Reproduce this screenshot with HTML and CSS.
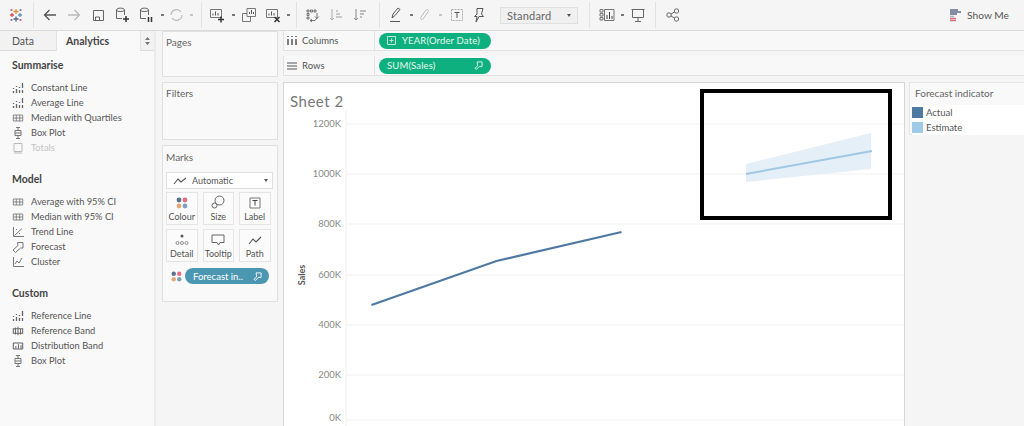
FILE: index.html
```html
<!DOCTYPE html>
<html lang="en">
<head>
<meta charset="utf-8">
<title>Sheet 2</title>
<link rel="stylesheet" href="styles.css">
</head>
<body>
<svg class="defs" aria-hidden="true">
  <symbol id="i-const" viewBox="0 0 12 12"><path d="M1.500 6v1M1.500 9v2M4.500 4v1M4.500 7v4M7.500 5v1M7.500 8v3M10.500 1v5M10.500 8v3" fill="none" stroke="#666" stroke-width="1.300"/></symbol>
  <symbol id="i-band" viewBox="0 0 14 12"><path d="M1.500 2.500h11v7h-11zM1.500 6h11M5 2.500v7M9 2.500v7" fill="none" stroke="#777" stroke-width="1"/></symbol>
  <symbol id="i-box" viewBox="0 0 12 12"><path d="M3 3.500h6v5H3zM3 6h6M6 .5v3M6 8.500v3M4 .5h4M4 11.500h4" fill="none" stroke="#777" stroke-width="1"/></symbol>
  <symbol id="i-totals" viewBox="0 0 12 12"><path d="M2 1.500h8v8H2zM2 11h8" fill="none" stroke="#bbb" stroke-width="1"/></symbol>
  <symbol id="i-trend" viewBox="0 0 12 12"><path d="M1.500 1v9.500H12M2.500 9.500 10 2.500M4 3l1 1M7 7l1 1" fill="none" stroke="#777" stroke-width="1"/></symbol>
  <symbol id="i-fore" viewBox="0 0 12 12"><path d="M5.500 1.500h5.500v5.500H8.500L3.500 11.500 1 9l5-4.500z" fill="none" stroke="#777" stroke-width="1"/></symbol>
  <symbol id="i-clus" viewBox="0 0 12 12"><path d="M1.500 1v9.500H12M3 8l2-3 2 2 3-5" fill="none" stroke="#777" stroke-width="1"/></symbol>
  <symbol id="i-refb" viewBox="0 0 14 12"><path d="M1.500 3.500h11v5h-11zM4 2v8M7 1v10M10 3v7" fill="none" stroke="#666" stroke-width="1.200"/></symbol>
  <symbol id="i-dist" viewBox="0 0 14 12"><path d="M1.500 2.500h11v7h-11zM4.500 6v3M7.500 4v5M10.500 5v4" fill="none" stroke="#555" stroke-width="1.100"/></symbol>
  <symbol id="i-dots" viewBox="0 0 12 12"><circle cx="3" cy="3" r="2.400" fill="#5b6f8f"/><circle cx="9" cy="3" r="2.400" fill="#e0707f"/><circle cx="3" cy="9" r="2.400" fill="#e5a77a"/><circle cx="9" cy="9" r="2.400" fill="#7aa3b8"/></symbol>
  <symbol id="i-search" viewBox="0 0 10 10"><path d="M3.500 1h5.500v5H6L2.500 9.500 1 8l3-2.500z" fill="none" stroke="currentColor" stroke-width="1"/></symbol>
</svg>

<header class="toolbar">
  <div class="tool-group g1">
    <span class="slot"><svg width="16" height="16" viewBox="0 0 16 16"><g fill="none" stroke-width="1.300"><path d="M8 2v5M5.500 4.500h5" stroke="#e08e3f"/><path d="M8 9.500v5M5.500 12h5" stroke="#4f6390"/><path d="M4 6v4M2 8h4" stroke="#d9525f"/><path d="M12 6v4M10 8h4" stroke="#5f95b0"/><path d="M3.500 2v2M2.500 3h2M12.500 12v2M11.500 13h2" stroke="#c06a8a"/><path d="M12.500 2v2M11.500 3h2M3.500 12v2M2.500 13h2" stroke="#8c7bb0"/></g></svg></span>
  </div>
  <div class="tool-group g2">
    <span class="slot"><svg width="14" height="12" viewBox="0 0 14 12"><path d="M13 6H1.500M6.500 1l-5 5 5 5" fill="none" stroke="#555" stroke-width="1.300"/></svg></span>
    <span class="slot"><svg width="14" height="12" viewBox="0 0 14 12"><path d="M1 6h11.500M7.500 1l5 5-5 5" fill="none" stroke="#bbb" stroke-width="1.300"/></svg></span>
    <span class="slot"><svg width="13" height="13" viewBox="0 0 13 13"><path d="M1.500 1.500h10v10h-10zM3.500 11.500V8h4v3.500" fill="none" stroke="#666"/></svg></span>
    <span class="slot"><svg width="15" height="16" viewBox="0 0 15 16"><path d="M1.500 3c0-2.500 8-2.500 8 0v5M1.500 3v8.500H7M1.500 3c0 2 8 2 8 0" fill="none" stroke="#666"/><path d="M11 9v6M8 12h6" stroke="#333" stroke-width="1.500"/></svg></span>
    <span class="slot"><svg width="15" height="16" viewBox="0 0 15 16"><path d="M1.500 3c0-2.500 8-2.500 8 0v5M1.500 3v8.500H7M1.500 3c0 2 8 2 8 0" fill="none" stroke="#666"/><path d="M9.500 10v5M12.500 10v5" stroke="#333" stroke-width="1.500"/></svg></span>
    <span class="dot w8"></span>
    <span class="slot w20"><svg width="15" height="14" viewBox="0 0 15 14"><path d="M2 7a5.500 5.500 0 0 1 10-3M13 7a5.500 5.500 0 0 1-10 3" fill="none" stroke="#bbb" stroke-width="1.200"/></svg></span>
    <span class="dot w10 pale"></span>
  </div>
  <div class="tool-group g3">
    <span class="slot"><svg width="16" height="16" viewBox="0 0 16 16"><path d="M1.500 2.500h11v8h-11z" fill="none" stroke="#777"/><path d="M4 8.500v-2M6.500 8.500v-4M9 8.500V6" stroke="#555"/><path d="M12 9.500v6M9 12.500h6" stroke="#333" stroke-width="1.500"/></svg></span>
    <span class="dot w8"></span>
    <span class="slot"><svg width="16" height="16" viewBox="0 0 16 16"><path d="M6 1.500h8.500v8H6zM1.500 6.500H6M1.500 6.500v8h8v-5" fill="none" stroke="#777"/><path d="M8.500 7V5M10.500 7V3M12.500 7V5" stroke="#555"/></svg></span>
    <span class="slot"><svg width="16" height="16" viewBox="0 0 16 16"><path d="M1.500 2.500h11v8h-11z" fill="none" stroke="#777"/><path d="M4 8.500v-2M6.500 8.500v-4M9 8.500V6" stroke="#555"/><path d="M9.500 10l5 5M14.500 10l-5 5" stroke="#333" stroke-width="1.500"/></svg></span>
    <span class="dot w6"></span>
  </div>
  <div class="tool-group g4">
    <span class="slot"><svg width="15" height="15" viewBox="0 0 15 15"><path d="M2 2h2v2H2zM5.500 2h2v2h-2zM9 2h2v2H9zM2 5.500h2v2H2zM2 9h2v2H2zM12 5v5l-2 2.500H5" fill="none" stroke="#666" stroke-width=".9"/><path d="M10 8.500l2 2 2-2M7 11l-2 1.500L7 14" fill="none" stroke="#666" stroke-width=".9"/></svg></span>
    <span class="slot"><svg width="14" height="14" viewBox="0 0 14 14"><path d="M3 1v11M1 10l2 2 2-2" fill="none" stroke="#aaa"/><path d="M7 3h2M7 6h4M7 9h6" stroke="#bbb" stroke-width="1.300"/></svg></span>
    <span class="slot"><svg width="14" height="14" viewBox="0 0 14 14"><path d="M3 1v11M1 10l2 2 2-2" fill="none" stroke="#888"/><path d="M7 3h6M7 6h4M7 9h2" stroke="#aaa" stroke-width="1.300"/></svg></span>
  </div>
  <div class="tool-group g5">
    <span class="slot"><svg width="14" height="16" viewBox="0 0 14 16"><path d="M3 11l1-4 5-6 2 1.500-5 6zM1 14.500h10" fill="none" stroke="#555"/></svg></span>
    <span class="dot w6"></span>
    <span class="slot w20"><svg width="12" height="15" viewBox="0 0 12 15"><path d="M3 9l5-7c2-1.500 3 .5 2 2L5 11c-1.500 1.500-3 0-2-2" fill="none" stroke="#bbb"/></svg></span>
    <span class="dot w12 pale"></span>
    <span class="slot w22"><svg width="14" height="14" viewBox="0 0 14 14"><path d="M1.500 1.500h11v11h-11z" fill="none" stroke="#aaa" stroke-dasharray="2 1"/><path d="M4.500 4.500h5M7 4.500v5.500" fill="none" stroke="#555"/></svg></span>
    <span class="slot w22"><svg width="14" height="16" viewBox="0 0 14 16"><path d="M5 1.500h6L9.500 7l2 2.500H7L4 15l1-5.500H2.500L5 7z" fill="none" stroke="#555"/></svg></span>
    <div class="fit-select"><span class="fit-label">Standard</span><span class="fit-arrow"></span></div>
  </div>
  <div class="tool-group g6">
    <span class="slot"><svg width="16" height="14" viewBox="0 0 16 14"><path d="M1 1.500h3v2.500H1zM1 5.500h3V8H1zM1 9.500h3V12H1zM5.500 1.500h9.500v11H5.500z" fill="none" stroke="#666" stroke-width=".9"/><path d="M8 11V7M10.500 11V4M13 11V8" stroke="#444"/></svg></span>
    <span class="dot w6"></span>
    <span class="slot w24b"><svg width="14" height="14" viewBox="0 0 14 14"><path d="M.500 1.500h13M1.500 1.500v8h11v-8M7 9.500V13M4 13.500h6" fill="none" stroke="#666"/></svg></span>
  </div>
  <div class="tool-group g7">
    <span class="slot"><svg width="14" height="14" viewBox="0 0 14 14"><circle cx="3" cy="7" r="2.200" fill="none" stroke="#666"/><circle cx="10.500" cy="3" r="2.200" fill="none" stroke="#666"/><circle cx="10.500" cy="11" r="2.200" fill="none" stroke="#666"/><path d="M5 6l3.500-2M5 8l3.500 2" stroke="#666"/></svg></span>
  </div>
  <div class="show-me">
    <svg width="12" height="13" viewBox="0 0 12 13"><path d="M0 1h8M0 3h11M0 5h7" stroke="#5f6b8a" stroke-width="1.500"/><path d="M0 7.500h4" stroke="#a9b1c4" stroke-width="1.500"/><path d="M0 9.500h6M0 11.500h6" stroke="#e0707f" stroke-width="1.500"/></svg>
    <span>Show Me</span>
  </div>
</header>

<main class="workspace">
  <aside class="side-pane">
    <div class="tabs">
      <div class="tab tab-data">Data</div>
      <div class="tab tab-active">Analytics</div>
      <div class="tab tab-menu"><svg width="5" height="8" viewBox="0 0 5 8"><path d="M0 3l2.500-3L5 3zM0 5l2.500 3L5 5z" fill="#777"/></svg></div>
    </div>
    <section class="an-section">
      <h2>Summarise</h2>
      <ul>
        <li><svg class="ic"><use href="#i-const"/></svg>Constant Line</li>
        <li><svg class="ic"><use href="#i-const"/></svg>Average Line</li>
        <li><svg class="ic"><use href="#i-band"/></svg>Median with Quartiles</li>
        <li><svg class="ic"><use href="#i-box"/></svg>Box Plot</li>
        <li class="off"><svg class="ic"><use href="#i-totals"/></svg>Totals</li>
      </ul>
    </section>
    <section class="an-section">
      <h2>Model</h2>
      <ul>
        <li><svg class="ic"><use href="#i-band"/></svg>Average with 95% CI</li>
        <li><svg class="ic"><use href="#i-band"/></svg>Median with 95% CI</li>
        <li><svg class="ic"><use href="#i-trend"/></svg>Trend Line</li>
        <li><svg class="ic"><use href="#i-fore"/></svg>Forecast</li>
        <li><svg class="ic"><use href="#i-clus"/></svg>Cluster</li>
      </ul>
    </section>
    <section class="an-section">
      <h2>Custom</h2>
      <ul>
        <li><svg class="ic"><use href="#i-const"/></svg>Reference Line</li>
        <li><svg class="ic"><use href="#i-refb"/></svg>Reference Band</li>
        <li><svg class="ic"><use href="#i-dist"/></svg>Distribution Band</li>
        <li><svg class="ic"><use href="#i-box"/></svg>Box Plot</li>
      </ul>
    </section>
  </aside>

  <div class="cards">
    <section class="card card-pages"><h3>Pages</h3></section>
    <section class="card card-filters"><h3>Filters</h3></section>
    <section class="card card-marks">
      <h3>Marks</h3>
      <div class="mark-type">
        <svg width="14" height="8" viewBox="0 0 14 8"><path d="M1 7l4-5 3 3 5-4" fill="none" stroke="#555" stroke-width="1.100"/></svg>
        <span>Automatic</span>
        <span class="mark-arrow"></span>
      </div>
      <div class="mark-grid">
        <div class="mark-btn"><svg width="12" height="12"><use href="#i-dots"/></svg><span>Colour</span></div>
        <div class="mark-btn"><svg width="14" height="14" viewBox="0 0 14 14"><circle cx="8.500" cy="5.500" r="4.500" fill="none" stroke="#666"/><circle cx="3.500" cy="10.500" r="2.500" fill="#f8f8f8" stroke="#666"/></svg><span>Size</span></div>
        <div class="mark-btn"><svg width="12" height="12" viewBox="0 0 12 12"><path d="M1 1h10v10H1z" fill="none" stroke="#777"/><path d="M3.500 3.500h5M6 3.500v5" fill="none" stroke="#444"/></svg><span>Label</span></div>
        <div class="mark-btn"><svg width="14" height="12" viewBox="0 0 14 12"><circle cx="7" cy="2" r="1.500" fill="#555"/><circle cx="2.500" cy="9" r="1.500" fill="none" stroke="#777" stroke-width=".8"/><circle cx="7" cy="9" r="1.500" fill="none" stroke="#777" stroke-width=".8"/><circle cx="11.500" cy="9" r="1.500" fill="none" stroke="#777" stroke-width=".8"/></svg><span>Detail</span></div>
        <div class="mark-btn"><svg width="14" height="12" viewBox="0 0 14 12"><path d="M1 1h12v7.500H9L7.500 11 6 8.500H1z" fill="none" stroke="#666"/></svg><span>Tooltip</span></div>
        <div class="mark-btn"><svg width="14" height="10" viewBox="0 0 14 10"><path d="M1 8l4-5 3 3 5-5" fill="none" stroke="#555" stroke-width="1.100"/></svg><span>Path</span></div>
      </div>
      <div class="mark-pill-row">
        <svg width="11" height="11"><use href="#i-dots"/></svg>
        <div class="pill pill-blue"><span>Forecast in..</span><svg class="pill-ic"><use href="#i-search"/></svg></div>
      </div>
    </section>
  </div>

  <div class="canvas-area">
    <div class="shelf">
      <div class="shelf-label"><svg width="10" height="9" viewBox="0 0 10 9"><path d="M1 0v1M5 0v1M9 0v1M1 3v6M5 3v6M9 3v6" stroke="#555" stroke-width="1.500"/></svg><span>Columns</span></div>
      <div class="pill pill-green"><svg width="9" height="9" viewBox="0 0 9 9"><path d="M.500.500h8v8h-8zM2.500 4.500h4M4.500 2.500v4" fill="none" stroke="#bfe8d8"/></svg><span>YEAR(Order Date)</span></div>
    </div>
    <div class="shelf">
      <div class="shelf-label"><svg width="10" height="8" viewBox="0 0 10 8"><path d="M0 1h10M0 4h10M0 7h10" stroke="#555"/></svg><span>Rows</span></div>
      <div class="pill pill-green pill-between"><span>SUM(Sales)</span><svg class="pill-ic"><use href="#i-search"/></svg></div>
    </div>
    <div class="view-row">
      <section class="view">
        <svg class="chart" viewBox="284 83 620 343" role="img" aria-label="Sheet 2 line chart of sales">
          <g class="grid">
            <path d="M346 124H904M346 174H904M346 224H904M346 275H904M346 325H904M346 375H904M346 420H904M346 110V426"/>
          </g>
          <text class="title" x="290" y="107">Sheet 2</text>
          <g class="ticks">
            <text x="341" y="127">1200K</text>
            <text x="341" y="177">1000K</text>
            <text x="341" y="227">800K</text>
            <text x="341" y="278">600K</text>
            <text x="341" y="328">400K</text>
            <text x="341" y="378">200K</text>
            <text x="341" y="421">0K</text>
          </g>
          <text class="axis-title" transform="translate(305 275) rotate(-90)">Sales</text>
          <path class="band" d="M746 164L871 133V169L746 182Z"/>
          <path class="line-est" d="M746 174L872 151"/>
          <path class="line-act" d="M371.500 305L496.500 261L621.500 232"/>
          <rect class="frame" x="702" y="91" width="188" height="127"/>
        </svg>
      </section>
      <section class="legend">
        <h3>Forecast indicator</h3>
        <div class="legend-row"><span class="sw sw-a"></span>Actual</div>
        <div class="legend-row"><span class="sw sw-e"></span>Estimate</div>
      </section>
    </div>
  </div>
</main>
</body>
</html>
```
FILE: styles.css
```css
* { box-sizing: border-box; }
html, body { margin: 0; padding: 0; height: 100%; }
body {
  width: 1024px; height: 426px; overflow: hidden;
  font-family: "Lato", "Liberation Sans", sans-serif;
  font-size: 10px; color: #555; background: #f5f5f5;
  display: flex; flex-direction: column;
}
.defs { position: absolute; width: 0; height: 0; }

/* toolbar */
.toolbar {
  height: 31px; flex: none; display: flex; align-items: stretch;
  background: #f5f5f5; border-bottom: 1px solid #dcdcdc;
}
.tool-group { display: flex; align-items: center; height: 26px; margin-top: 2px; border-right: 1px solid #e2e2e2; }
.g1 { width: 34px; padding-left: 4px; }
.g2 { width: 168px; padding-left: 4px; }
.g3 { width: 95px; padding-left: 3px; }
.g4 { width: 83px; padding-left: 3px; }
.g5 { width: 210px; padding-left: 4px; }
.g6 { width: 66px; padding-left: 5px; }
.g7 { width: 40px; padding-left: 5px; border-right: 0; }
.slot { width: 24px; height: 24px; flex: none; display: flex; align-items: center; justify-content: center; }
.w20 { width: 20px; }
.w22 { width: 22px; }
.w24b { width: 26px; }
.dot { flex: none; height: 24px; display: flex; align-items: center; justify-content: center; }
.dot::after { content: ""; width: 3px; height: 2px; background: #777; }
.dot.pale::after { background: #c4c4c4; }
.w6 { width: 6px; } .w8 { width: 8px; } .w10 { width: 10px; } .w12 { width: 12px; }
.fit-select {
  width: 78px; height: 17px; margin-left: 10px; padding: 0 6px;
  display: flex; align-items: center; justify-content: space-between;
  background: #f0f0f0; border: 1px solid #e0e0e0;
  font-size: 11px; color: #666; letter-spacing: .2px;
}
.fit-arrow, .mark-arrow { width: 0; height: 0; border: 2.500px solid transparent; border-top: 3px solid #555; border-bottom: 0; }
.show-me { margin-left: auto; padding-right: 15px; display: flex; align-items: center; gap: 5px; font-size: 10.200px; color: #555; }

/* layout */
.workspace { flex: 1; display: flex; min-height: 0; }
.side-pane { width: 156px; flex: none; background: #f9f9f9; border-right: 2px solid #ebebeb; }
.tabs { display: flex; height: 20px; }
.tab { display: flex; align-items: center; font-size: 10.500px; }
.tab-data { width: 57px; padding-left: 12px; background: #f2f2f2; border-bottom: 1px solid #dcdcdc; border-right: 1px solid #e2e2e2; }
.tab-active { width: 83px; padding-left: 9px; font-weight: 700; color: #444; }
.tab-menu { flex: 1; justify-content: center; background: #f2f2f2; border-left: 1px solid #e2e2e2; border-bottom: 1px solid #dcdcdc; }
.an-section { padding-left: 12px; margin-bottom: 17px; }
.tabs + .an-section { margin-top: 7px; }
.an-section h2 { margin: 0 0 8px; padding-top: 1px; font-size: 10.500px; line-height: 13px; font-weight: 700; color: #444; }
.an-section ul { list-style: none; margin: 0; padding: 0; }
.an-section li { height: 15px; display: flex; align-items: center; font-size: 9.300px; color: #555; }
.an-section li.off { color: #c4c4c4; }
.ic { width: 12px; height: 12px; margin-right: 7px; flex: none; }

/* cards */
.cards { width: 126px; flex: none; padding: 0 4px 0 6px; display: flex; flex-direction: column; gap: 5px; }
.card { background: #f9f9f9; border: 1px solid #e0e0e0; padding: 4px 4px 0 3px; }
.card h3, .legend h3 { margin: 0; font-weight: 400; font-size: 10px; line-height: 12px; color: #666; }
.card-pages { height: 46px; }
.card-filters { height: 58px; }
.card-marks { height: 157px; padding-top: 5px; }
.mark-type { height: 17px; margin-top: 9px; padding-left: 6px; display: flex; align-items: center; gap: 5px; background: #fff; border: 1px solid #e0e0e0; font-size: 9px; }
.mark-type .mark-arrow { margin-left: auto; margin-right: 4px; }
.mark-grid { display: grid; grid-template-columns: repeat(3, 31.500px); grid-auto-rows: 33px; column-gap: 5px; row-gap: 4px; margin-top: 3px; }
.mark-btn { background: #fbfbfb; border: 1px solid #e4e4e4; display: flex; flex-direction: column; align-items: center; justify-content: flex-end; gap: 2px; padding-bottom: 2px; font-size: 9px; color: #555; }
.mark-pill-row { display: flex; align-items: center; gap: 3px; margin-top: 6px; padding-left: 5px; }

.pill { height: 16px; border-radius: 8px; color: #fff; display: flex; align-items: center; font-size: 9.500px; }
.pill-blue { width: 84px; background: #4b97b1; padding: 0 7px 0 8px; justify-content: space-between; }
.pill-green { width: 112px; background: #0fb07f; padding: 0 8px; gap: 6px; color: #e8f7f1; letter-spacing: .15px; }
.pill-between { justify-content: space-between; }
.pill-ic { width: 9px; height: 9px; flex: none; }

/* shelves + view */
.canvas-area { flex: 1; min-width: 0; padding-left: 1px; }
.shelf { height: 20px; margin-bottom: 5px; display: flex; align-items: center; gap: 4px; background: #f8f8f8; border-bottom: 1px solid #e2e2e2; }
.shelf-label { width: 92px; height: 100%; padding-left: 3px; display: flex; align-items: center; gap: 5px; border-right: 1px solid #e2e2e2; border-left: 1px solid #e2e2e2; font-size: 9.500px; color: #555; }
.view-row { display: flex; gap: 4px; align-items: flex-start; margin-top: 6px; }
.view { width: 622px; height: 345px; flex: none; background: #fff; border: 1px solid #d6d6d6; border-bottom: 0; }
.chart { display: block; width: 620px; height: 343px; }
.grid path { fill: none; stroke: #f1f1f1; stroke-width: 1; }
.title { font-size: 15px; fill: #777; letter-spacing: .5px; }
.ticks text { font-size: 9.500px; fill: #888; text-anchor: end; }
.axis-title { font-size: 9px; font-weight: 700; fill: #555; text-anchor: middle; }
.band { fill: #e4eff8; }
.line-est { fill: none; stroke: #a0c8e4; stroke-width: 2; }
.line-act { fill: none; stroke: #4e79a3; stroke-width: 2.200; }
.frame { fill: none; stroke: #000; stroke-width: 4; }
.legend { flex: 1; height: 53px; background: #f9f9f9; border: 1px solid #e4e4e4; border-right: 0; padding: 4px 0 0 2px; }
.legend h3 { padding-left: 3px; margin-bottom: 6px; }
.legend-row { height: 15px; display: flex; align-items: center; gap: 3px; font-size: 9.500px; background: #fff; }
.sw { width: 11px; height: 11px; flex: none; }
.sw-a { background: #4e79a3; }
.sw-e { background: #a0cbe8; }
```
